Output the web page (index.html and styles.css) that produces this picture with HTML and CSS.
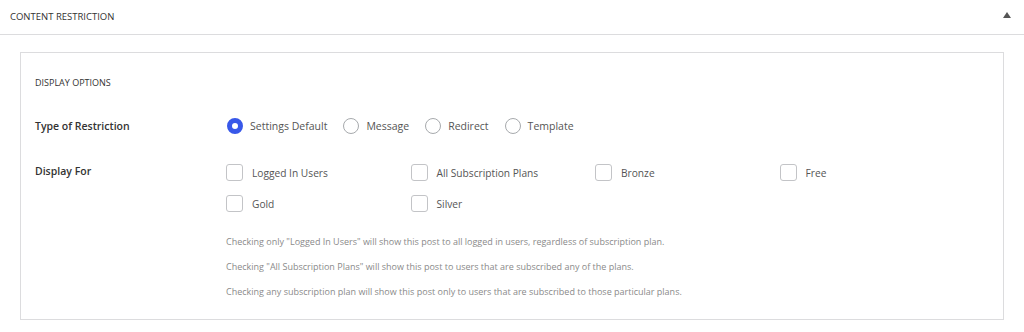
FILE: index.html
```html
<!DOCTYPE html>
<html lang="en">
<head>
  <meta charset="UTF-8">
  <meta name="viewport" content="width=device-width, initial-scale=1.0">
  <title>Content Restriction</title>
  <link rel="stylesheet" href="styles.css">
</head>

<body>
  <div class="panel">
    <div class="panel-header">
      <h2>Content Restriction</h2>
      <span class="toggle-arrow"></span>
    </div>

    <div class="panel-body">
      <div class="options-box">
        <h3>Display Options</h3>

        <div class="field-row">
          <div class="field-label">Type of Restriction</div>
          <div class="radio-group">
            <label class="radio checked"><span class="dot"></span>Settings Default</label>
            <label class="radio"><span class="dot"></span>Message</label>
            <label class="radio"><span class="dot"></span>Redirect</label>
            <label class="radio"><span class="dot"></span>Template</label>
          </div>
        </div>

        <div class="field-row display-for">
          <div class="field-label">Display For</div>
          <div class="field-content">
            <div class="check-grid">
              <label class="check"><span class="box"></span>Logged In Users</label>
              <label class="check"><span class="box"></span>All Subscription Plans</label>
              <label class="check"><span class="box"></span>Bronze</label>
              <label class="check"><span class="box"></span>Free</label>
              <label class="check"><span class="box"></span>Gold</label>
              <label class="check"><span class="box"></span>Silver</label>
            </div>

            <div class="help-text">
              <p>Checking only "Logged In Users" will show this post to all logged in users, regardless of subscription plan.</p>
              <p>Checking "All Subscription Plans" will show this post to users that are subscribed any of the plans.</p>
              <p>Checking any subscription plan will show this post only to users that are subscribed to those particular plans.</p>
            </div>
          </div>
        </div>
      </div>
    </div>
  </div>
</body>
</html>
```

FILE: styles.css
```css
/* Global Styles */
body {
  margin: 0;
  background: #fff;
  font-family: 'Open Sans', 'Noto Sans', sans-serif;
  color: #333;
}

.panel {
  background: #fff;
}

/* Header */
.panel-header {
  height: 35px;
  display: flex;
  align-items: center;
  justify-content: space-between;
  padding: 0 13px 0 10px;
  border-bottom: 1px solid #dcdcde;
  box-sizing: border-box;
}

.panel-header h2 {
  margin: 0;
  font-size: 9.5px;
  font-weight: 400;
  text-transform: uppercase;
  color: #333;
  margin-top: -2px;
}

.toggle-arrow {
  width: 0;
  height: 0;
  border-left: 4px solid transparent;
  border-right: 4px solid transparent;
  border-bottom: 6px solid #555;
  margin-top: -4px;
}

/* Body */
.panel-body {
  padding: 17px 20px 12px 20px;
}

.options-box {
  border: 1px solid #dcdcde;
  padding: 22px 14px 15px 14px;
}

.options-box h3 {
  margin: 0;
  font-size: 9px;
  font-weight: 400;
  line-height: 16px;
  text-transform: uppercase;
  color: #333;
}

.field-row {
  display: flex;
  margin-top: 25px;
}

.field-label {
  width: 192px;
  flex-shrink: 0;
  font-size: 10.5px;
  font-weight: 600;
  line-height: 20px;
  color: #333;
}

/* Radios */
.radio-group {
  display: flex;
  align-items: center;
  height: 20px;
}

.radio {
  display: flex;
  align-items: center;
  font-size: 10.5px;
  color: #555;
  margin-right: 16px;
}

.radio .dot {
  width: 16px;
  height: 16px;
  border: 1px solid #a7aaad;
  border-radius: 50%;
  box-sizing: border-box;
  margin-right: 7px;
}

.radio.checked .dot {
  border: 5px solid #3858e9;
  background: #fff;
}

/* Checkboxes */
.display-for {
  margin-top: 28px;
}

.display-for .field-label {
  line-height: 14px;
}

.field-content {
  margin-left: -1px;
}

.check-grid {
  display: grid;
  grid-template-columns: repeat(4, 184.5px);
  row-gap: 14px;
}

.check {
  display: flex;
  align-items: center;
  height: 17px;
  font-size: 10.2px;
  color: #555;
}

.check .box {
  width: 17px;
  height: 17px;
  border: 1px solid #c3c4c7;
  border-radius: 3px;
  box-sizing: border-box;
  margin-right: 9px;
}

/* Help */
.help-text {
  margin-top: 17px;
}

.help-text p {
  margin: 0;
  font-size: 9px;
  line-height: 25px;
  color: #8a8a8a;
}
```
